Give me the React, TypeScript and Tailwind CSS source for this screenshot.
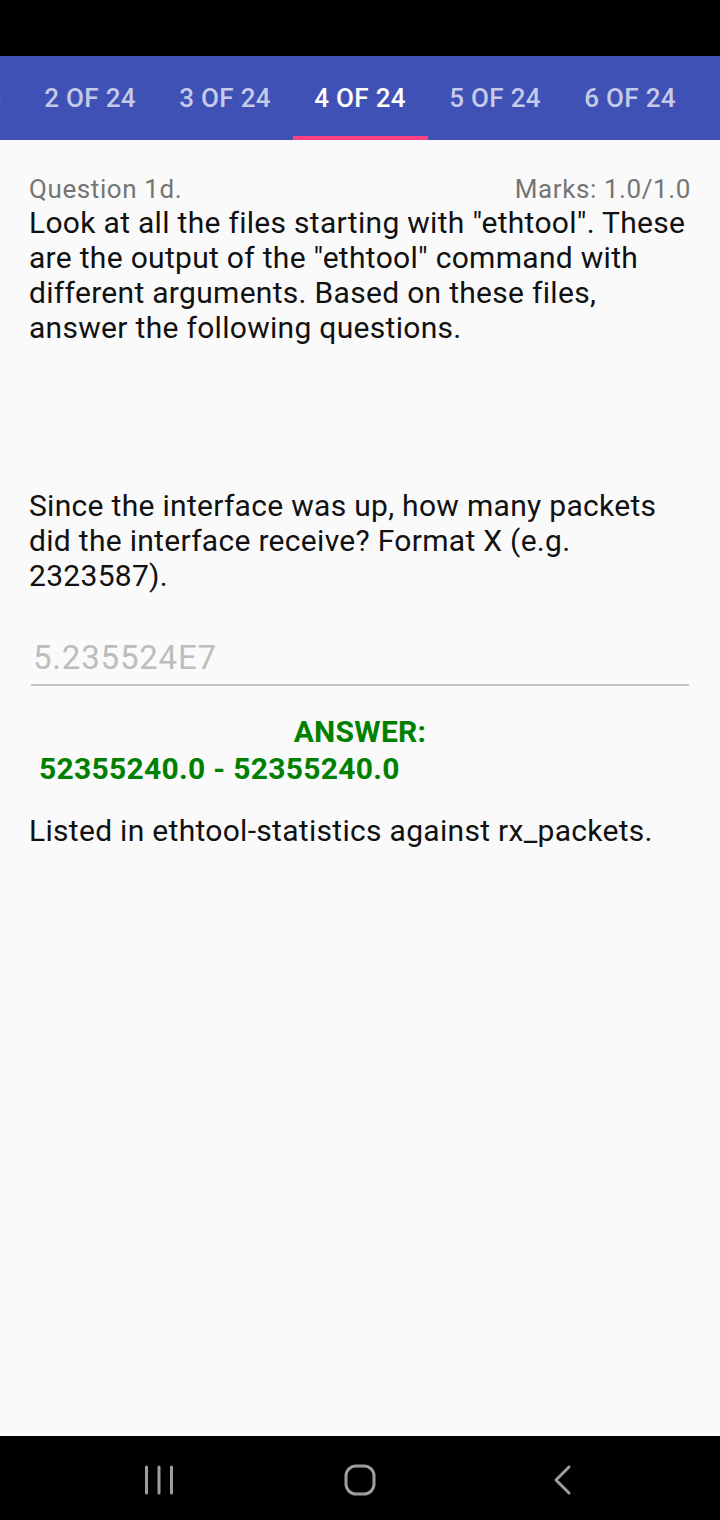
export default function App() {
  const tabs = ["1 OF 24", "2 OF 24", "3 OF 24", "4 OF 24", "5 OF 24", "6 OF 24", "7 OF 24"];
  const active = 3;

  return (
    <div className="w-[720px] h-[1520px] flex flex-col bg-[#fafafa] font-['Roboto',sans-serif] overflow-hidden">
      {/* status bar */}
      <div className="h-[56px] bg-black shrink-0" />

      {/* tabs */}
      <div className="h-[84px] bg-[#3f51b5] shrink-0 overflow-hidden">
        <div className="flex ml-[-112.5px] h-full">
          {tabs.map((t, i) => (
            <div
              key={t}
              className={
                "w-[135px] shrink-0 flex flex-col items-center justify-end " +
                (i === active ? "text-white" : "text-[#c5cae9]")
              }
            >
              <span className="text-[26px] font-medium leading-none tracking-[0.3px] mb-[25px]">{t}</span>
              <div className={"h-[4px] w-full " + (i === active ? "bg-[#ff4081]" : "bg-transparent")} />
            </div>
          ))}
        </div>
      </div>

      {/* content */}
      <div className="flex-1 px-[29px] pt-[34px]">
        <div className="flex justify-between items-baseline text-[#757575] text-[26px] leading-[30px] tracking-[0.6px]">
          <span>Question 1d.</span>
          <span>Marks: 1.0/1.0</span>
        </div>
        <p className="text-[#111] text-[30px] leading-[35px] tracking-[0.3px] mt-[1px]">
          Look at all the files starting with "ethtool". These are the output of the "ethtool" command with different
          arguments. Based on these files, answer the following questions.
        </p>
        <p className="text-[#111] text-[30px] leading-[35px] tracking-[0.3px] mt-[143px]">
          Since the interface was up, how many packets did the interface receive? Format X (e.g. 2323587).
        </p>

        <div className="mt-[46px] mx-[2px] border-b-2 border-[#c4c4c4] pb-[7px]">
          <span className="block text-[#bdbdbd] text-[33px] leading-[38px] tracking-[0.8px] pl-[2px]">5.235524E7</span>
        </div>

        <div className="mt-[27px] text-[#008000] font-bold text-[30px] leading-[37px] tracking-[0.3px]">
          <div className="text-center">ANSWER:</div>
          <div className="pl-[10px]">52355240.0 - 52355240.0</div>
        </div>

        <p className="text-[#111] text-[30px] leading-[35px] tracking-[0.3px] mt-[26px]">
          Listed in ethtool-statistics against rx_packets.
        </p>
      </div>

      {/* nav bar */}
      <div className="h-[84px] bg-black shrink-0 flex items-center justify-center gap-[141px] pt-[4px]">
        <div className="w-[60px] flex justify-center">
          <svg width="30" height="30" viewBox="0 0 30 30">
            <g stroke="#9e9e9e" strokeWidth="3" strokeLinecap="round">
              <line x1="2.5" y1="2" x2="2.5" y2="28" />
              <line x1="15" y1="2" x2="15" y2="28" />
              <line x1="27.5" y1="2" x2="27.5" y2="28" />
            </g>
          </svg>
        </div>
        <div className="w-[60px] flex justify-center">
          <svg width="34" height="34" viewBox="0 0 34 34">
            <rect x="3" y="3" width="28" height="28" rx="10" fill="none" stroke="#9e9e9e" strokeWidth="3" />
          </svg>
        </div>
        <div className="w-[60px] flex justify-center pl-[4px]">
          <svg width="22" height="32" viewBox="0 0 22 32">
            <polyline
              points="17,3 4,16 17,29"
              fill="none"
              stroke="#9e9e9e"
              strokeWidth="3"
              strokeLinecap="round"
              strokeLinejoin="round"
            />
          </svg>
        </div>
      </div>
    </div>
  );
}
